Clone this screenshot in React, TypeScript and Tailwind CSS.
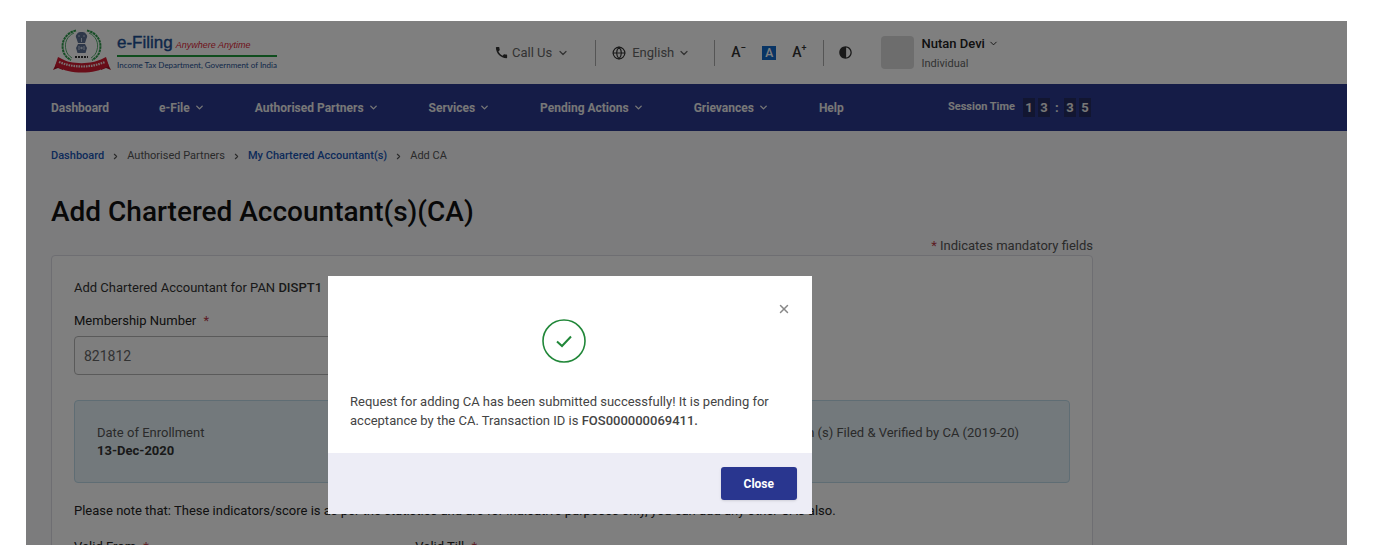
import React from "react";
import { ChevronDown, ChevronRight, Globe, X } from "lucide-react";
import { MdCall, MdContrast } from "react-icons/md";

const navItems = [
  { label: "Dashboard", menu: false },
  { label: "e-File", menu: true },
  { label: "Authorised Partners", menu: true },
  { label: "Services", menu: true },
  { label: "Pending Actions", menu: true },
  { label: "Grievances", menu: true },
  { label: "Help", menu: false },
];

function Emblem() {
  return (
    <svg viewBox="0 0 60 44" className="h-11 w-[60px]" aria-hidden="true">
      <g fill="none" stroke="#2c9a4b" strokeWidth="2" strokeDasharray="2.6 0.6">
        <path d="M24 1.500C14 4 9 12 11 21c1 5 4 8 8 10" />
        <path d="M35 1.500c10 2.500 15 10.500 13 19.500c-1 5-4 8-8 10" />
      </g>
      <g fill="none" stroke="#2c9a4b" strokeWidth="0.8">
        <path d="M22 4C15 7 12 14 14 21c1 4 3 6 6 8" />
        <path d="M37 4c7 3 10 10 8 17c-1 4-3 6-6 8" />
      </g>
      <g fill="#5d7092">
        <path d="M25 5c1-2 3-2 4.500-2s3.500 0 4.500 2c1.500 1 1.500 3 .5 4.500L33 14h-7L24.500 9.500C23.500 8 23.500 6 25 5z" />
        <path d="M26 15h7l2 4-1.500 5h-8L24 19z" />
      </g>
      <g fill="#c9d2e2">
        <circle cx="27" cy="7" r="0.8" />
        <circle cx="32" cy="7" r="0.8" />
        <path d="M29 9h1v4h-1zM26.500 17h1v4h-1zM31.500 17h1v4h-1z" />
        <circle cx="29.500" cy="19" r="1.200" />
      </g>
      <path d="M23 28h13" stroke="#333" strokeWidth="2" strokeDasharray="2 1" />
      <path d="M1 41l4-8 7 2-1 6-5-2zM59 41l-4-8-7 2 1 6 5-2z" fill="#a80f22" />
      <path d="M6 28c6 3 9 4.500 12 5 7 1.500 16 1.500 23 0 4-.8 7-2 13-5l3 9c-5 2.500-9 4-13 5-9 2-19 2-28 0-4-1-8-2.500-13-5z" fill="#d31b31" />
      <path d="M7 33c15 6 31 6 46 0" fill="none" stroke="#f3dfe1" strokeWidth="2.200" strokeDasharray="1.600 0.900" />
    </svg>
  );
}

function Divider() {
  return <span className="h-[26px] w-px bg-[#aaa]" />;
}

function Header() {
  return (
    <header className="flex h-[63px] items-center bg-white pl-[26px] text-[13px] text-[#666]">
      <a href="#home" className="flex w-[442px] shrink-0 items-center gap-[5px] pb-1" aria-label="e-Filing home">
        <Emblem />
        <span className="flex flex-col pt-1 font-['Liberation_Sans',sans-serif]">
          <span className="flex items-baseline gap-[3px] border-b-2 border-[#1f9b3c] leading-5">
            <span className="text-[17px] text-[#1d4f93] [-webkit-text-stroke:0.4px_#1d4f93]">e-Filing</span>
            <span className="text-[9px] text-[#e02436] italic">Anywhere Anytime</span>
          </span>
          <span className="font-[Lato,sans-serif] text-[8px] leading-4 text-[#1d4f93]">
            Income Tax Department, Government of India
          </span>
        </span>
      </a>
      <button className="flex items-center gap-[3px]">
        <MdCall size={15} className="text-[#333]" />
        Call Us
        <ChevronDown size={12} strokeWidth={2.5} className="ml-0.5" />
      </button>
      <span className="ml-[26px] flex items-center gap-4">
        <Divider />
        <button className="flex items-center gap-1.5">
          <Globe size={14} className="text-[#333]" />
          <span>English</span>
          <ChevronDown size={12} strokeWidth={2.5} className="-ml-0.5" />
        </button>
      </span>
      <span className="ml-6 flex items-center gap-4 text-[#333]">
        <Divider />
        <button aria-label="Decrease text size" className="flex text-[14px] font-medium">
          A<span className="text-[10px] leading-3">−</span>
        </button>
        <button aria-label="Default text size" className="flex size-[14px] items-center justify-center bg-[#1169c9] text-[12px] font-medium text-white">
          A
        </button>
        <button aria-label="Increase text size" className="flex text-[14px] font-medium">
          A<span className="text-[9px] leading-3">+</span>
        </button>
      </span>
      <span className="ml-4 flex items-center gap-[14px] text-[#333]">
        <Divider />
        <button aria-label="Contrast">
          <MdContrast size={15} />
        </button>
      </span>
      <button className="ml-7 flex items-center gap-2 text-left">
        <span className="size-[33px] rounded-sm bg-[#dadada]" />
        <span className="flex flex-col gap-1 pt-0.5">
          <span className="flex items-center gap-[3px] text-[13px] leading-4 font-medium text-[#222]">
            Nutan Devi <ChevronDown size={11} />
          </span>
          <span className="text-[11px] leading-4">Individual</span>
        </span>
      </button>
    </header>
  );
}

function Nav() {
  return (
    <nav className="flex h-[47px] items-center bg-[#2b388f] pl-[25px] text-[12px] font-bold text-[#eee]">
      <ul className="flex w-[897px] shrink-0 gap-[50px]">
        {navItems.map((item) => (
          <li key={item.label}>
            <a href={"#" + item.label} className="flex items-center gap-1">
              {item.label}
              {item.menu && <ChevronDown size={11} strokeWidth={3} />}
            </a>
          </li>
        ))}
      </ul>
      <div className="flex items-center gap-2">
        <span className="text-[11px]">Session Time</span>
        <span className="flex items-center gap-[3px] text-[13px]">
          <span className="w-3 bg-[#252c62] text-center">1</span>
          <span className="w-3 bg-[#252c62] text-center">3</span>
          <span className="w-2 text-center">:</span>
          <span className="w-3 bg-[#252c62] text-center">3</span>
          <span className="w-3 bg-[#252c62] text-center">5</span>
        </span>
      </div>
    </nav>
  );
}

function Field({ id, label, value }: { id: string; label: string; value?: string }) {
  return (
    <div className="flex flex-col gap-[7px]">
      <label htmlFor={id} className="text-[13px] leading-4 text-[#222]">
        {label} <span className="ml-1 text-[#b83848]">*</span>
      </label>
      <input
        id={id}
        defaultValue={value}
        className="h-[39px] w-full rounded-sm border border-[#b5b5b5] bg-[#fcfcfc] px-[9px] text-[14px] text-[#666]"
      />
    </div>
  );
}

function SuccessDialog() {
  return (
    <div role="dialog" aria-modal="true" aria-label="Request submitted" className="w-[484px] bg-white">
      <div className="relative flex h-[177px] flex-col items-center px-[22px] pt-[43px]">
        <button aria-label="Dismiss" className="absolute top-[26px] right-[21px] text-[#888]">
          <X size={14} strokeWidth={2.5} />
        </button>
        <svg viewBox="0 0 44 44" className="mr-3 size-11 shrink-0" fill="none" stroke="#218739" aria-hidden="true">
          <circle cx="22" cy="22" r="21" strokeWidth="1.600" />
          <path d="M15 22.500l5 4.500 9-9.500" strokeWidth="2" />
        </svg>
        <p className="mt-[29px] w-full text-[13px] leading-[19px] text-[#444]">
          Request for adding CA has been submitted successfully! It is pending for acceptance by the CA. Transaction ID is{" "}
          <span className="font-medium">FOS000000069411.</span>
        </p>
      </div>
      <div className="flex h-[61px] items-center justify-end bg-[#ededf6] px-[15px]">
        <button className="h-[33px] rounded-[3px] bg-[#29368f] px-[23px] text-[12px] font-bold text-white shadow">Close</button>
      </div>
    </div>
  );
}

function CrumbArrow() {
  return <ChevronRight size={9} strokeWidth={3} />;
}

export default function App() {
  return (
    <div className="flex h-screen flex-col overflow-hidden bg-white px-[26px] pt-[21px] font-[Roboto,sans-serif]">
      <div className="relative flex-1 overflow-hidden bg-[#f8f8fb]">
        <Header />
        <Nav />
        <main className="mr-[254px] ml-[25px]">
          <div className="flex items-center gap-[7px] pt-[17px] text-[11px] leading-4 text-[#555]">
            <a href="#dashboard" className="font-medium text-[#1a56b4]">Dashboard</a>
            <CrumbArrow />
            <span>Authorised Partners</span>
            <CrumbArrow />
            <a href="#my-ca" className="font-medium text-[#1a56b4]">My Chartered Accountant(s)</a>
            <CrumbArrow />
            <span>Add CA</span>
          </div>
          <h1 className="mt-8 text-[28px] leading-8 font-medium text-[#111]">Add Chartered Accountant(s)(CA)</h1>
          <p className="mt-2.5 text-right text-[13px] leading-4 text-[#555]">
            <span className="text-[#b83848]">*</span> Indicates mandatory fields
          </p>
          <section className="mt-px rounded-sm border border-[#dcdce4] bg-white px-[22px] pt-6 pb-10">
            <p className="text-[13px] leading-4 text-[#333]">
              Add Chartered Accountant for PAN <span className="font-medium">DISPT1</span>
            </p>
            <div className="mt-[17px] grid grid-cols-3 gap-7">
              <Field id="membership" label="Membership Number" value="821812" />
            </div>
            <div className="mt-[25px] grid h-[83px] grid-cols-[1fr_1fr_auto] rounded-sm border border-[#bedbe9] bg-[#e6f2f9] pt-[23px] pr-[50px] pl-[22px] text-[13px] leading-[18px] text-[#555]">
              <div>
                <p>Date of Enrollment</p>
                <p className="font-bold text-[#333]">13-Dec-2020</p>
              </div>
              <div />
              <p>No. of Form (s) Filed &amp; Verified by CA (2019-20)</p>
            </div>
            <p className="mt-5 text-[13px] leading-4 text-[#222]">
              Please note that: These indicators/score is as per the statistics and are for indicative purposes only, you can add any other CAs also.
            </p>
            <div className="mt-5 grid grid-cols-3 gap-7">
              <Field id="valid-from" label="Valid From" />
              <Field id="valid-till" label="Valid Till" />
            </div>
          </section>
        </main>
        <div className="absolute inset-0 bg-black/50 pt-[255px] pl-[302px]">
          <SuccessDialog />
        </div>
      </div>
    </div>
  );
}
